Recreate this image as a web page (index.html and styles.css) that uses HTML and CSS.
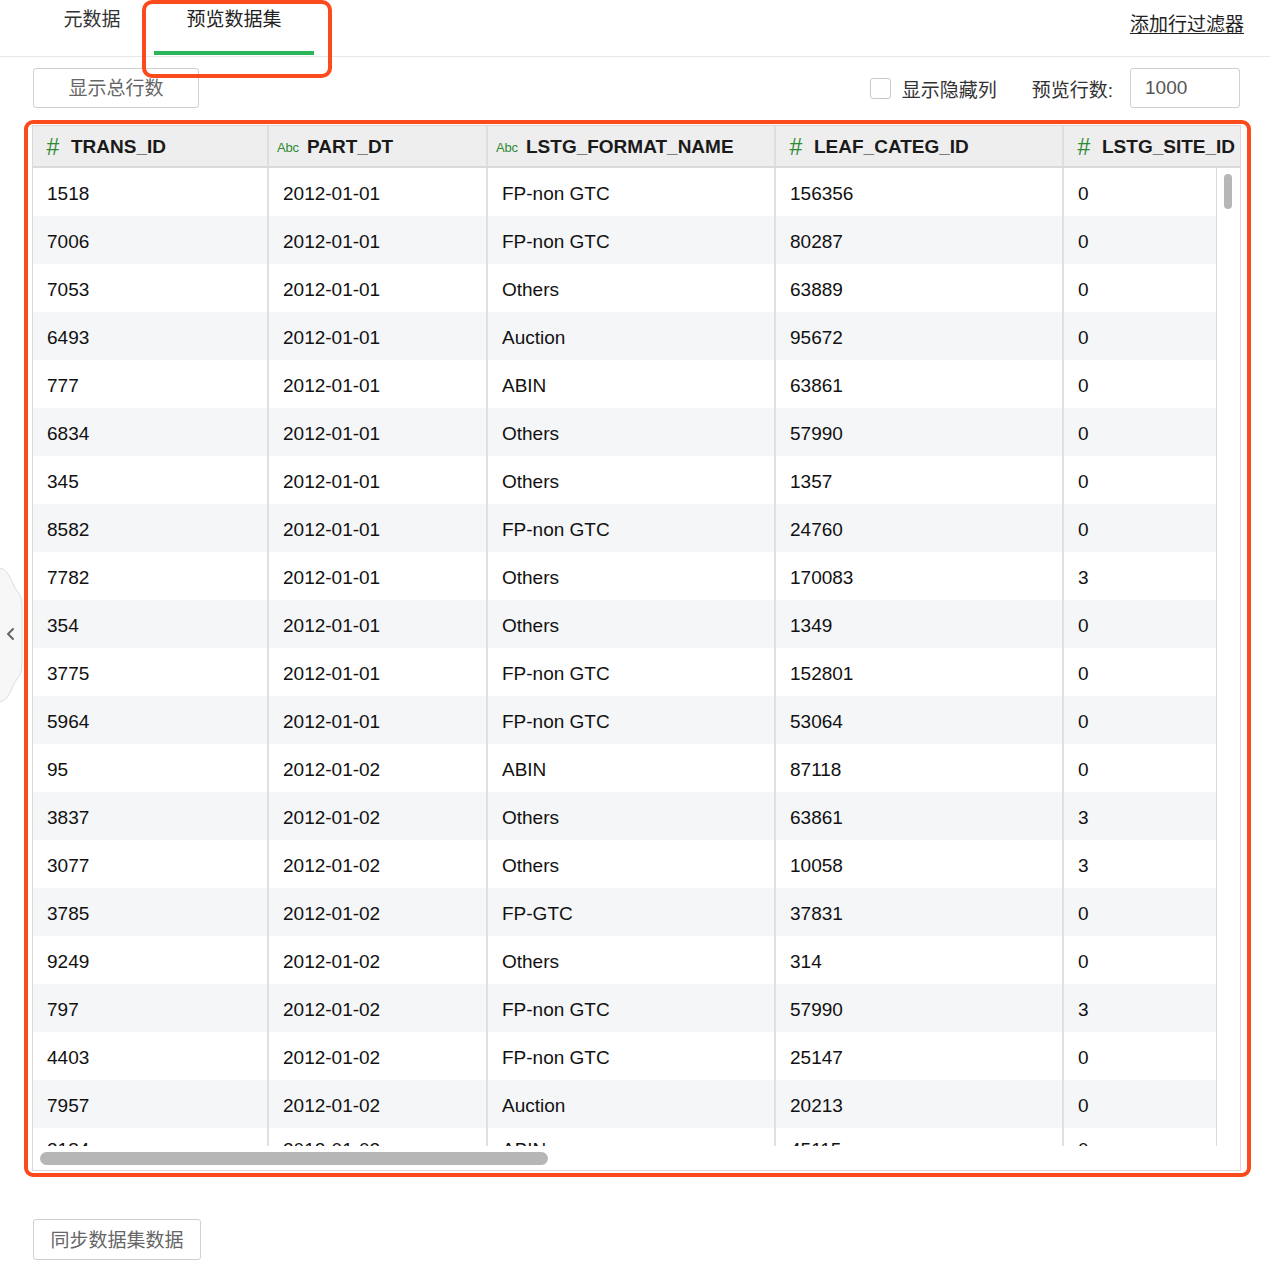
FILE: index.html
```html
<!DOCTYPE html>
<html lang="zh-CN">
<head>
<meta charset="utf-8">
<title>预览数据集</title>
<link rel="stylesheet" href="styles.css">
</head>
<body>
<div class="page">
  <div class="tabs">
    <div class="tab">元数据</div>
    <div class="tab active">预览数据集</div>
    <a class="filter-link">添加行过滤器</a>
  </div>

  <div class="toolbar">
    <button class="btn">显示总行数</button>
    <div class="toolbar-right">
      <span class="checkbox"></span>
      <span class="label">显示隐藏列</span>
      <span class="label rows-label">预览行数:</span>
      <div class="input">1000</div>
    </div>
  </div>

  <div class="table">
    <div class="head grid-head">
      <div class="hcell"><span class="type num">#</span>TRANS_ID</div>
      <div class="hcell"><span class="type abc">Abc</span>PART_DT</div>
      <div class="hcell"><span class="type abc">Abc</span>LSTG_FORMAT_NAME</div>
      <div class="hcell"><span class="type num">#</span>LEAF_CATEG_ID</div>
      <div class="hcell last"><span class="type num">#</span>LSTG_SITE_ID</div>
    </div>
    <div class="body">
      <div class="rows">
        <div class="row"><div class="cell">1518</div><div class="cell">2012-01-01</div><div class="cell">FP-non GTC</div><div class="cell">156356</div><div class="cell last">0</div></div>
        <div class="row"><div class="cell">7006</div><div class="cell">2012-01-01</div><div class="cell">FP-non GTC</div><div class="cell">80287</div><div class="cell last">0</div></div>
        <div class="row"><div class="cell">7053</div><div class="cell">2012-01-01</div><div class="cell">Others</div><div class="cell">63889</div><div class="cell last">0</div></div>
        <div class="row"><div class="cell">6493</div><div class="cell">2012-01-01</div><div class="cell">Auction</div><div class="cell">95672</div><div class="cell last">0</div></div>
        <div class="row"><div class="cell">777</div><div class="cell">2012-01-01</div><div class="cell">ABIN</div><div class="cell">63861</div><div class="cell last">0</div></div>
        <div class="row"><div class="cell">6834</div><div class="cell">2012-01-01</div><div class="cell">Others</div><div class="cell">57990</div><div class="cell last">0</div></div>
        <div class="row"><div class="cell">345</div><div class="cell">2012-01-01</div><div class="cell">Others</div><div class="cell">1357</div><div class="cell last">0</div></div>
        <div class="row"><div class="cell">8582</div><div class="cell">2012-01-01</div><div class="cell">FP-non GTC</div><div class="cell">24760</div><div class="cell last">0</div></div>
        <div class="row"><div class="cell">7782</div><div class="cell">2012-01-01</div><div class="cell">Others</div><div class="cell">170083</div><div class="cell last">3</div></div>
        <div class="row"><div class="cell">354</div><div class="cell">2012-01-01</div><div class="cell">Others</div><div class="cell">1349</div><div class="cell last">0</div></div>
        <div class="row"><div class="cell">3775</div><div class="cell">2012-01-01</div><div class="cell">FP-non GTC</div><div class="cell">152801</div><div class="cell last">0</div></div>
        <div class="row"><div class="cell">5964</div><div class="cell">2012-01-01</div><div class="cell">FP-non GTC</div><div class="cell">53064</div><div class="cell last">0</div></div>
        <div class="row"><div class="cell">95</div><div class="cell">2012-01-02</div><div class="cell">ABIN</div><div class="cell">87118</div><div class="cell last">0</div></div>
        <div class="row"><div class="cell">3837</div><div class="cell">2012-01-02</div><div class="cell">Others</div><div class="cell">63861</div><div class="cell last">3</div></div>
        <div class="row"><div class="cell">3077</div><div class="cell">2012-01-02</div><div class="cell">Others</div><div class="cell">10058</div><div class="cell last">3</div></div>
        <div class="row"><div class="cell">3785</div><div class="cell">2012-01-02</div><div class="cell">FP-GTC</div><div class="cell">37831</div><div class="cell last">0</div></div>
        <div class="row"><div class="cell">9249</div><div class="cell">2012-01-02</div><div class="cell">Others</div><div class="cell">314</div><div class="cell last">0</div></div>
        <div class="row"><div class="cell">797</div><div class="cell">2012-01-02</div><div class="cell">FP-non GTC</div><div class="cell">57990</div><div class="cell last">3</div></div>
        <div class="row"><div class="cell">4403</div><div class="cell">2012-01-02</div><div class="cell">FP-non GTC</div><div class="cell">25147</div><div class="cell last">0</div></div>
        <div class="row"><div class="cell">7957</div><div class="cell">2012-01-02</div><div class="cell">Auction</div><div class="cell">20213</div><div class="cell last">0</div></div>
        <div class="row partial"><div class="cell">2184</div><div class="cell">2012-01-02</div><div class="cell">ABIN</div><div class="cell">45115</div><div class="cell last">0</div></div>
      </div>
      <div class="vscroll"><div class="vthumb"></div></div>
    </div>
    <div class="hscroll"><div class="hthumb"></div></div>
  </div>

  <div class="footer">
    <button class="btn btn-sync">同步数据集数据</button>
  </div>

  <svg class="flyout" width="26" height="150" viewBox="0 0 26 150">
    <path d="M0,8 C8,10 10,18 14,26 C18,34 22,34 22,46 L22,104 C22,116 18,116 14,124 C10,132 8,140 0,142" fill="#f7f7f7" stroke="#dcdcdc" stroke-width="1"/>
    <polyline points="13,69 8,74 13,79" fill="none" stroke="#666" stroke-width="2" stroke-linecap="round" stroke-linejoin="round"/>
  </svg>

  <div class="annot annot-tab"></div>
  <div class="annot annot-table"></div>
</div>
</body>
</html>
```

FILE: styles.css
```css
* { box-sizing: border-box; }

body {
  margin: 0;
  background: #fff;
  color: #1a1a1a;
  font-family: "Liberation Sans", "Noto Sans CJK SC", sans-serif;
}

.page {
  position: relative;
  width: 1270px;
  height: 1275px;
  overflow: hidden;
}

/* Tabs */
.tabs {
  display: flex;
  align-items: flex-start;
  height: 57px;
  padding-left: 34px;
  border-bottom: 1px solid #e8e8e8;
}

.tab {
  width: 116px;
  height: 56px;
  text-align: center;
  font-size: 19px;
  line-height: 40px;
  color: #333;
}

.tab.active {
  width: 160px;
  height: 55px;
  margin-left: 4px;
  border-bottom: 4px solid #2bb55a;
  color: #222;
}

.filter-link {
  margin-left: auto;
  margin-right: 26px;
  margin-top: 5px;
  font-size: 19px;
  line-height: 40px;
  color: #222;
  text-decoration: underline;
  text-underline-offset: 2px;
}

/* Toolbar */
.toolbar {
  display: flex;
  align-items: center;
  height: 40px;
  margin: 11px 30px 0 33px;
}

.btn {
  width: 166px;
  height: 40px;
  padding: 0 0 3px;
  border: 1px solid #cfcfcf;
  border-radius: 3px;
  background: #fff;
  font-family: inherit;
  font-size: 19px;
  color: #666;
}

.toolbar-right {
  display: flex;
  align-items: center;
  margin-left: auto;
}

.checkbox {
  width: 21px;
  height: 21px;
  margin-right: 11px;
  border: 1px solid #c8c8c8;
  border-radius: 3px;
  background: #fff;
}

.label {
  font-size: 19px;
  color: #333;
}

.rows-label {
  margin-left: 35px;
  margin-right: 17px;
}

.input {
  width: 110px;
  height: 40px;
  padding-left: 14px;
  border: 1px solid #cfcfcf;
  border-radius: 3px;
  font-size: 19px;
  line-height: 38px;
  color: #555;
}

/* Table */
.table {
  width: 1209px;
  margin: 17px 0 0 32px;
  border: 1px solid #d9d9d9;
}

.grid-head,
.row {
  display: grid;
  grid-template-columns: 236px 219px 288px 288px 1fr;
}

.head {
  height: 42px;
  background: #eeeeee;
  border-bottom: 2px solid #dadada;
}

.hcell {
  display: flex;
  align-items: center;
  padding: 2px 0 0 8px;
  border-right: 2px solid #dedede;
  font-size: 19px;
  font-weight: bold;
  color: #1a1a1a;
  white-space: nowrap;
  overflow: hidden;
}

.hcell.last { border-right: none; }

.type {
  width: 24px;
  margin-right: 7px;
  text-align: center;
  color: #2f8a35;
  font-weight: normal;
}

.type.num {
  font-size: 23px;
  margin-right: 6px;
}

.type.abc {
  font-size: 13px;
  letter-spacing: -0.2px;
  margin-left: -1px;
}

.body {
  display: flex;
  height: 978px;
}

.rows {
  width: 1183px;
  overflow: hidden;
}

.row {
  height: 48px;
  background: #fff;
}

.row:nth-child(even) {
  background: #f5f6f8;
}

.row.partial {
  background: linear-gradient(#ffffff, #ffffff 40%, #e8e8ec);
}

.cell {
  display: flex;
  align-items: center;
  padding: 3px 0 0 14px;
  border-right: 2px solid #e0e0e0;
  font-size: 19px;
  color: #111;
  white-space: nowrap;
  overflow: hidden;
}

.row.partial .cell {
  padding: 0 0 5px 14px;
}

.row.partial .cell.last {
  padding-left: 14px;
}

.cell.last { border-right: none; }

.vscroll {
  width: 24px;
  border-left: 1px solid #dcdcdc;
  background: #fff;
  padding: 6px 0 0 7px;
}

.vthumb {
  width: 8px;
  height: 35px;
  border-radius: 4px;
  background: #b6b6b6;
}

.hscroll {
  height: 24px;
  padding: 6px 0 0 7px;
  background: #fff;
}

.hthumb {
  width: 508px;
  height: 13px;
  border-radius: 7px;
  background: #b6b6b6;
}

/* Footer */
.footer {
  margin: 48px 0 0 33px;
}

.btn-sync {
  width: 168px;
  height: 41px;
}

/* Overlays */
.flyout {
  position: absolute;
  left: 0;
  top: 560px;
}

.annot {
  position: absolute;
  border: 4px solid #fb4a1c;
  border-radius: 10px;
  pointer-events: none;
}

.annot-tab {
  left: 142px;
  top: 0;
  width: 190px;
  height: 78px;
}

.annot-table {
  left: 24px;
  top: 120px;
  width: 1227px;
  height: 1057px;
  border-radius: 9px;
}
```
